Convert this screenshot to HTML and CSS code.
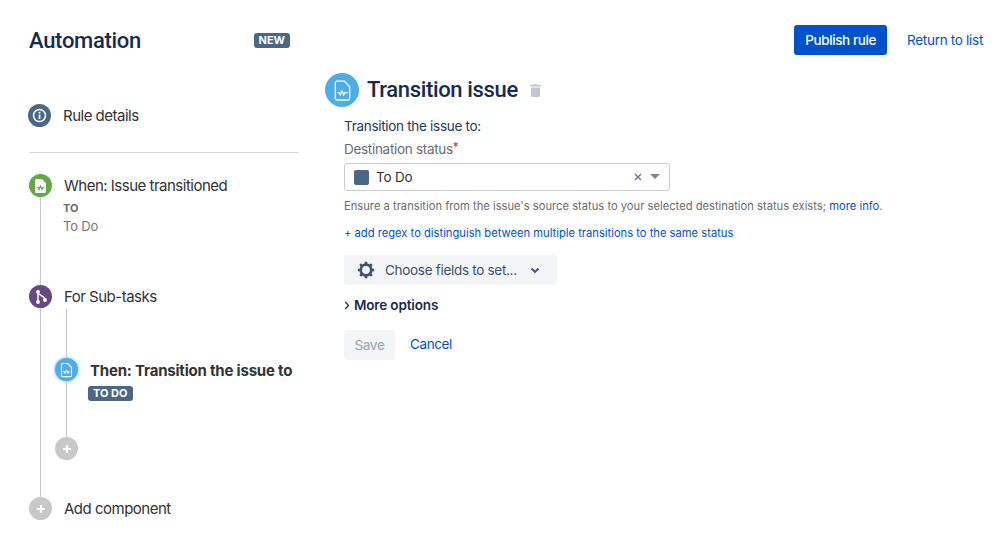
FILE: index.html
```html
<!DOCTYPE html>
<html lang="en">
<head>
<meta charset="utf-8">
<title>Automation</title>
<link rel="stylesheet" href="styles.css">
</head>
<body>
<div class="page">
  <aside class="sidebar">
    <header class="brand">
      <h1 class="brand-title">Automation</h1>
      <span class="lozenge">NEW</span>
    </header>
    <div class="rule-details">
      <span class="dot dot-slate">
        <svg width="15" height="15" viewBox="0 0 15 15" fill="none"><circle cx="7.5" cy="7.5" r="6" stroke="#fff" stroke-width="1.6"/><rect x="6.7" y="6.6" width="1.7" height="4.4" fill="#fff"/><rect x="6.7" y="3.9" width="1.7" height="1.7" fill="#fff"/></svg>
      </span>
      <span class="step-label">Rule details</span>
    </div>
    <hr class="divider">
    <div class="step step-when">
      <div class="rail">
        <span class="dot dot-green">
          <svg width="13" height="16" viewBox="0 0 13 16" fill="none"><path d="M1 2.500a1.500 1.500 0 0 1 1.500-1.500h5.300L12 5.200v8.300a1.500 1.500 0 0 1-1.500 1.500h-8A1.500 1.500 0 0 1 1 13.500z" fill="#fff"/><path d="M2.800 9.500h1.400l.8 2 1.500-3.500 1.500 3.500.8-2h1.400" stroke="#64a846" stroke-width="1.100" fill="none"/></svg>
        </span>
        <span class="rail-line"></span>
      </div>
      <div class="step-body">
        <div class="step-label">When: Issue transitioned</div>
        <div class="meta-key">TO</div>
        <div class="meta-value">To Do</div>
      </div>
    </div>
    <div class="step step-for">
      <div class="rail">
        <span class="dot dot-purple">
          <svg width="14" height="16" viewBox="0 0 14 16" fill="none"><circle cx="4" cy="2.800" r="1.900" fill="#fff"/><circle cx="4" cy="13" r="1.900" fill="#fff"/><circle cx="11" cy="11" r="1.900" fill="#fff"/><path d="M4 3v10M4 3.500c0 3 7 3 7 7.500" stroke="#fff" stroke-width="1.500"/></svg>
        </span>
        <span class="rail-line"></span>
      </div>
      <div class="step-body">
        <div class="step-label">For Sub-tasks</div>
        <div class="branch">
          <div class="rail rail-branch">
            <span class="rail-line rail-stub"></span>
            <span class="dot dot-blue dot-active">
              <svg width="13" height="16" viewBox="0 0 13 16" fill="none"><path d="M1.500 2.700a1.200 1.200 0 0 1 1.200-1.200h5l3.800 3.900v8a1.200 1.200 0 0 1-1.200 1.200H2.700a1.200 1.200 0 0 1-1.200-1.200z" stroke="#fff" stroke-width="1.100"/><path d="M3 9.500h1.200l.8 2 1.500-3.500 1.500 3.500.8-2H10" stroke="#fff" stroke-width="1"/></svg>
            </span>
            <span class="rail-line"></span>
            <span class="dot dot-grey">
              <svg width="10" height="10" viewBox="0 0 10 10"><path d="M5 1v8M1 5h8" stroke="#fff" stroke-width="2.200"/></svg>
            </span>
          </div>
          <div class="branch-body">
            <div class="branch-title">Then: Transition the issue to</div>
            <span class="lozenge lozenge-todo">TO DO</span>
          </div>
        </div>
      </div>
    </div>
    <div class="rule-add">
      <span class="dot dot-grey">
        <svg width="10" height="10" viewBox="0 0 10 10"><path d="M5 1v8M1 5h8" stroke="#fff" stroke-width="2.200"/></svg>
      </span>
      <span class="step-label">Add component</span>
    </div>
  </aside>

  <main class="main">
    <div class="actions">
      <button class="btn btn-primary" type="button">Publish rule</button>
      <a class="link return-link" href="#">Return to list</a>
    </div>
    <div class="title-row">
      <span class="dot dot-blue dot-large">
        <svg width="19" height="23" viewBox="0 0 13 16" fill="none"><path d="M1.500 2.700a1.200 1.200 0 0 1 1.200-1.200h5l3.800 3.900v8a1.200 1.200 0 0 1-1.200 1.200H2.700a1.200 1.200 0 0 1-1.200-1.200z" stroke="#fff" stroke-width=".9"/><path d="M3 9.500h1.200l.8 1.700 1-2.800h.3l1 2.800.8-1.700H10" stroke="#fff" stroke-width=".75"/></svg>
      </span>
      <h2 class="main-title">Transition issue</h2>
      <svg class="trash" width="11" height="13" viewBox="0 0 11 13"><path d="M4 0h3v1h4v1.500H0V1h4z" fill="#c1c7d0"/><path d="M1 3.500h9v8a1.500 1.500 0 0 1-1.500 1.500h-6A1.500 1.500 0 0 1 1 11.500z" fill="#c1c7d0"/></svg>
    </div>
    <form class="form">
      <div class="form-heading">Transition the issue to:</div>
      <label class="field-label">Destination status<span class="required">*</span></label>
      <div class="select">
        <span class="swatch"></span>
        <span class="select-value">To Do</span>
        <svg class="clear" width="8" height="8" viewBox="0 0 8 8"><path d="M1 1l6 6M7 1l-6 6" stroke="#6b778c" stroke-width="1.400"/></svg>
        <span class="caret"></span>
      </div>
      <p class="hint">Ensure a transition from the issue's source status to your selected destination status exists; <a class="link" href="#">more info</a>.</p>
      <p class="regex"><a class="link" href="#">+ add regex to distinguish between multiple transitions to the same status</a></p>
      <div class="choose">
        <svg width="18" height="18" viewBox="0 0 18 18" fill="none"><circle cx="9" cy="9" r="5.300" stroke="#42526e" stroke-width="2.800"/><path d="M9 .8v3M9 14.200v3M.8 9h3M14.200 9h3M3.200 3.200l2.100 2.100M12.700 12.700l2.100 2.100M14.800 3.200l-2.100 2.100M5.300 12.700l-2.100 2.100" stroke="#42526e" stroke-width="2.600"/></svg>
        <span class="choose-text">Choose fields to set...</span>
        <svg width="10" height="7" viewBox="0 0 10 7" fill="none"><path d="M1.500 1.500L5 5l3.500-3.500" stroke="#42526e" stroke-width="1.800"/></svg>
      </div>
      <div class="more">
        <svg width="6" height="9" viewBox="0 0 6 9" fill="none"><path d="M1.300 1L4.500 4.500 1.300 8" stroke="#172b4d" stroke-width="1.300"/></svg>
        <span>More options</span>
      </div>
      <div class="form-actions">
        <button class="btn btn-disabled" type="button">Save</button>
        <a class="link cancel" href="#">Cancel</a>
      </div>
    </form>
  </main>
</div>
</body>
</html>
```

FILE: styles.css
```css
* { box-sizing: border-box; }
html, body { margin: 0; height: 100%; background: #fff; }
body {
  font-family: Inter, "Noto Sans", "Liberation Sans", sans-serif;
  color: #253858;
  overflow: hidden;
}
.page {
  display: flex;
  height: 547px;
  padding-left: 28px;
}
.sidebar { width: 271px; flex: none; display: flex; flex-direction: column; }
.brand {
  height: 80px;
  padding: 26px 9px 0 1px;
  display: flex;
  justify-content: space-between;
  align-items: flex-start;
}
.brand-title {
  margin: 0;
  font-family: Roboto, Inter, sans-serif;
  font-size: 22px;
  line-height: 29px;
  font-weight: 500;
  letter-spacing: -0.3px;
  color: #172b4d;
}
.lozenge {
  display: inline-block;
  background: #4a6785;
  color: #fff;
  font-size: 11px;
  font-weight: 700;
  line-height: 14px;
  height: 15px;
  padding: 0 5px;
  border-radius: 3px;
  margin-top: 7px;
}
.lozenge-todo { display: block; width: fit-content; margin-top: 4px; margin-left: -2px; }
.dot {
  flex: none;
  width: 23px;
  height: 23px;
  border-radius: 50%;
  display: flex;
  align-items: center;
  justify-content: center;
}
.dot-slate { background: #4a6785; }
.dot-green { background: #64a846; }
.dot-purple { background: #654982; }
.dot-blue { background: #4fade6; }
.dot-grey { background: #c8c8c8; }
.dot-active { box-shadow: 0 0 3px 1px #a8d8f5; }
.dot-large { width: 34px; height: 34px; }
.rule-details {
  display: flex;
  align-items: center;
  gap: 12px;
  height: 23px;
  margin-top: 24px;
}
.step-label {
  font-size: 15px;
  line-height: 23px;
  color: #333;
  letter-spacing: -0.5px;
}
.divider {
  width: 270px;
  margin: 25px 0 21px 1px;
  border: 0;
  border-top: 1px solid #d5d5d5;
  flex: none;
}
.step { display: flex; gap: 12px; margin-left: 1px; }
.step-when { height: 111px; }
.step-for { height: 212px; }
.rail {
  flex: none;
  width: 23px;
  display: flex;
  flex-direction: column;
  align-items: center;
}
.rail-line { flex: 1; width: 1px; background: #c8c8c8; }
.rail-stub { flex: none; height: 49px; }
.step-body { min-width: 0; }
.meta-key {
  font-size: 11px;
  line-height: 14px;
  font-weight: 700;
  color: #6b6b6b;
  margin: 4px 0 0 -1px;
}
.meta-value {
  font-size: 13px;
  line-height: 18px;
  color: #777;
  margin: 2px 0 0 -1px;
  letter-spacing: -0.2px;
}
.branch {
  display: flex;
  gap: 12px;
  margin: 1px 0 0 -9px;
  height: 151px;
}
.branch .rail { height: 151px; }
.branch-body { padding-top: 50px; white-space: nowrap; }
.branch-title {
  font-size: 15px;
  line-height: 23px;
  font-weight: 700;
  color: #333;
  letter-spacing: -0.2px;
}
.rule-add {
  display: flex;
  align-items: center;
  gap: 12px;
  margin-left: 1px;
}
.main { flex: 1; min-width: 0; padding-left: 26px; padding-right: 16px; }
.actions {
  display: flex;
  justify-content: flex-end;
  align-items: flex-start;
  gap: 20px;
  padding-top: 25px;
  height: 73px;
}
.btn {
  font: inherit;
  font-size: 13.5px;
  font-weight: 500;
  letter-spacing: -0.4px;
  border: 0;
  border-radius: 3px;
  height: 30px;
  padding: 0;
}
.btn-primary { width: 93px; background: #0052cc; color: #fff; }
.btn-disabled { width: 51px; background: #f4f5f7; color: #a5adba; }
.link { color: #0052cc; text-decoration: none; }
.return-link { font-size: 13.5px; line-height: 30px; letter-spacing: -0.3px; }
.title-row {
  display: flex;
  align-items: center;
  height: 34px;
}
.main-title {
  margin: 0 0 1px 8px;
  font-family: Roboto, Inter, sans-serif;
  font-size: 22px;
  line-height: 33px;
  font-weight: 500;
  letter-spacing: -0.35px;
  color: #172b4d;
}
.trash { margin-left: 12px; margin-top: 1px; }
.form { margin-left: 19px; padding-top: 10px; }
.form-heading {
  font-size: 13.5px;
  line-height: 18px;
  color: #253858;
  letter-spacing: -0.3px;
}
.field-label {
  display: block;
  margin-top: 5px;
  font-size: 13.5px;
  line-height: 18px;
  color: #6b6b6b;
  letter-spacing: -0.3px;
}
.required { color: #de350b; font-size: 12px; vertical-align: 3px; line-height: 0; }
.select {
  margin-top: 5px;
  width: 326px;
  height: 28px;
  border: 1px solid #ccc;
  border-radius: 3px;
  display: flex;
  align-items: center;
  padding: 0 9px;
}
.swatch { width: 15px; height: 15px; background: #4a6785; border-radius: 2px; flex: none; }
.select-value { margin-left: 7px; font-size: 13.5px; letter-spacing: -0.2px; color: #333; flex: 1; }
.clear { flex: none; }
.caret {
  flex: none;
  margin-left: 8px;
  width: 0;
  height: 0;
  border-left: 5px solid transparent;
  border-right: 5px solid transparent;
  border-top: 5px solid #7a869a;
  margin-top: -2px;
}
.hint {
  margin: 8px 0 0;
  font-size: 11.2px;
  line-height: 15px;
  color: #6b6b6b;
  white-space: nowrap;
}
.regex {
  margin: 12px 0 0;
  font-size: 11.2px;
  line-height: 15px;
}
.choose {
  margin-top: 14px;
  width: 213px;
  height: 30px;
  background: #f4f5f7;
  border-radius: 3px;
  display: flex;
  align-items: center;
  padding-left: 13px;
  font-size: 13.5px;
  color: #42526e;
}
.choose-text { margin-left: 10px; width: 145px; letter-spacing: -0.3px; }
.more {
  margin-top: 11px;
  height: 18px;
  display: flex;
  align-items: center;
  gap: 4px;
  font-size: 13.5px;
  line-height: 18px;
  font-weight: 600;
  letter-spacing: -0.15px;
  color: #172b4d;
}
.form-actions {
  margin-top: 16px;
  display: flex;
  align-items: center;
  gap: 15px;
}
.cancel { font-size: 13.5px; letter-spacing: -0.4px; margin-bottom: 2px; }
```
